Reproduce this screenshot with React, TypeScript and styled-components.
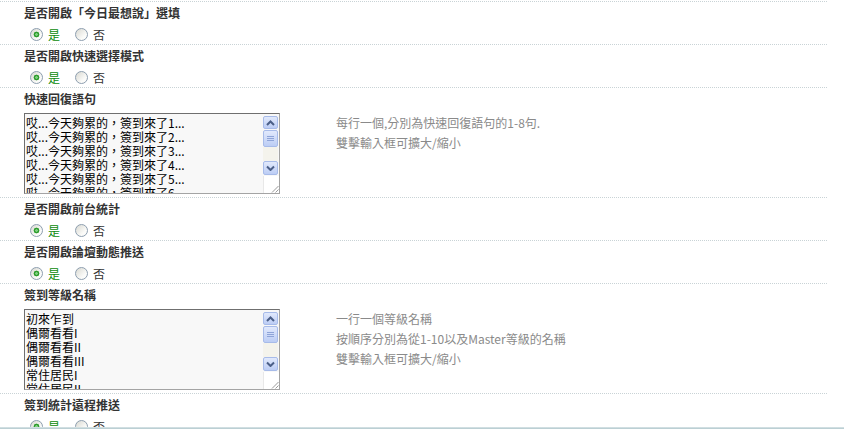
import React from "react";
import styled, { createGlobalStyle } from "styled-components";

type Setting =
  | { kind: "switch"; title: string; name: string }
  | { kind: "text"; title: string; name: string; lines: string[]; hints: string[] };

const replyLines = [1, 2, 3, 4, 5, 6, 7, 8].map((n) => `哎...今天夠累的，簽到來了${n}...`);

const levelNames = [
  "初來乍到",
  "偶爾看看I",
  "偶爾看看II",
  "偶爾看看III",
  "常住居民I",
  "常住居民II",
  "常住居民III",
  "以壇為家I",
  "以壇為家II",
  "以壇為家III",
  "管理我家",
];

const settings: Setting[] = [
  { kind: "switch", title: "是否開啟「今日最想說」選填", name: "sayopen" },
  { kind: "switch", title: "是否開啟快速選擇模式", name: "fastreply" },
  {
    kind: "text",
    title: "快速回復語句",
    name: "replytext",
    lines: replyLines,
    hints: ["每行一個,分別為快速回復語句的1-8句.", "雙擊輸入框可擴大/縮小"],
  },
  { kind: "switch", title: "是否開啟前台統計", name: "stats" },
  { kind: "switch", title: "是否開啟論壇動態推送", name: "feed" },
  {
    kind: "text",
    title: "簽到等級名稱",
    name: "levels",
    lines: levelNames,
    hints: ["一行一個等級名稱", "按順序分別為從1-10以及Master等級的名稱", "雙擊輸入框可擴大/縮小"],
  },
  { kind: "switch", title: "簽到統計遠程推送", name: "remote" },
];

export default function App() {
  return (
    <>
      <GlobalStyle />
      <SettingsList>
        {settings.map((s) => (
          <Row key={s.name}>
            <Title>{s.title}</Title>
            {s.kind === "switch" ? (
              <Options>
                <Option $on>
                  <Radio type="radio" name={s.name} defaultChecked />
                  是
                </Option>
                <Option>
                  <Radio type="radio" name={s.name} />
                  否
                </Option>
              </Options>
            ) : (
              <Field>
                <TextBox>
                  <Textarea readOnly defaultValue={s.lines.join("\n")} />
                  <ScrollBar />
                </TextBox>
                <Hints>
                  {s.hints.map((h) => (
                    <div key={h}>{h}</div>
                  ))}
                </Hints>
              </Field>
            )}
          </Row>
        ))}
      </SettingsList>
      <BottomEdge />
    </>
  );
}

const ScrollBar = () => (
  <Bar>
    <ArrowButton>
      <svg width="9" height="6" viewBox="0 0 9 6">
        <path d="M1 5 L4.5 1.5 L8 5" fill="none" stroke="#4b5f88" strokeWidth="2" />
      </svg>
    </ArrowButton>
    <Thumb>
      <svg width="7" height="7" viewBox="0 0 7 7">
        <path d="M0 1.5 H7 M0 3.5 H7 M0 5.5 H7" stroke="#8ea4d8" strokeWidth="1" />
      </svg>
    </Thumb>
    <Track />
    <ArrowButton $tall>
      <svg width="9" height="6" viewBox="0 0 9 6">
        <path d="M1 1.5 L4.5 5 L8 1.5" fill="none" stroke="#4b5f88" strokeWidth="2" />
      </svg>
    </ArrowButton>
    <Resizer>
      <svg width="9" height="9" viewBox="0 0 9 9">
        <path d="M8.5 2 L2 8.5 M8.5 5.5 L5.5 8.5" stroke="#9a9a9a" strokeWidth="1" />
      </svg>
    </Resizer>
  </Bar>
);

const GlobalStyle = createGlobalStyle`
  body {
    margin: 0;
    background: #fff;
    font-family: "Noto Sans CJK TC", "Noto Sans", sans-serif;
    font-size: 12px;
    color: #333;
  }
`;

const SettingsList = styled.div`
  width: 827px;
  padding-top: 1px;
`;

const Row = styled.div`
  border-top: 1px dotted #c9d3d6;
  padding: 2px 0 0 24px;
`;

const Title = styled.div`
  font-weight: bold;
  line-height: 18px;
  color: #333;
`;

const Options = styled.div`
  display: flex;
  align-items: center;
  gap: 15px;
  height: 19px;
  padding: 3px 0 0 6px;
`;

const Option = styled.label<{ $on?: boolean }>`
  display: flex;
  align-items: center;
  gap: 5px;
  line-height: 14px;
  color: ${(p) => (p.$on ? "#0a8a0a" : "#333")};
`;

const Radio = styled.input`
  appearance: none;
  margin: 0;
  width: 13px;
  height: 13px;
  border-radius: 50%;
  border: 1px solid #8d9eaf;
  box-sizing: border-box;
  background: linear-gradient(135deg, #d9d9d2, #fbfbf9 70%);
  &:checked {
    background: radial-gradient(circle, #7fd07f 0 1px, #2e9c2e 1.6px 2.6px, transparent 3.2px),
      linear-gradient(135deg, #d9d9d2, #fbfbf9 70%);
  }
`;

const Field = styled.div`
  display: flex;
  gap: 56px;
  margin: 5px 0 3px;
`;

const TextBox = styled.div`
  display: flex;
  width: 256px;
  height: 81px;
  box-sizing: border-box;
  border: 1px solid;
  border-color: #6f6f6f #a4a4a4 #a4a4a4 #6f6f6f;
  background: #f8f8f8;
`;

const Textarea = styled.textarea`
  flex: 1;
  min-width: 0;
  border: none;
  outline: none;
  resize: none;
  overflow: hidden;
  background: transparent;
  padding: 2px 1px;
  margin: 0;
  font-family: "Noto Sans CJK TC", "Noto Sans", sans-serif;
  font-size: 12px;
  line-height: 14px;
  color: #000;
  white-space: pre;
`;

const Bar = styled.div`
  display: flex;
  flex-direction: column;
  width: 16px;
  padding-top: 2px;
`;

const ArrowButton = styled.div<{ $tall?: boolean }>`
  display: flex;
  align-items: center;
  justify-content: center;
  width: 15px;
  height: ${(p) => (p.$tall ? 14 : 13)}px;
  box-sizing: border-box;
  border: 1px solid #a7bbe9;
  border-radius: 2px;
  background: linear-gradient(#e1e9fc, #bccdf5);
`;

const Thumb = styled(ArrowButton)`
  height: 17px;
  margin-top: 1px;
`;

const Track = styled.div`
  flex: 1;
  width: 15px;
  background: #f4f3ec;
`;

const Resizer = styled.div`
  display: flex;
  align-items: flex-end;
  justify-content: flex-end;
  height: 17px;
  margin-top: 1px;
  background: #fff;
  border-left: 1px solid #e8e8e8;
`;

const Hints = styled.div`
  line-height: 20px;
  color: #8a8a8a;
`;

const BottomEdge = styled.div`
  position: fixed;
  left: 0;
  right: 0;
  bottom: 0;
  height: 2px;
  background: linear-gradient(#dbe6e8, #b1c8cd);
`;
